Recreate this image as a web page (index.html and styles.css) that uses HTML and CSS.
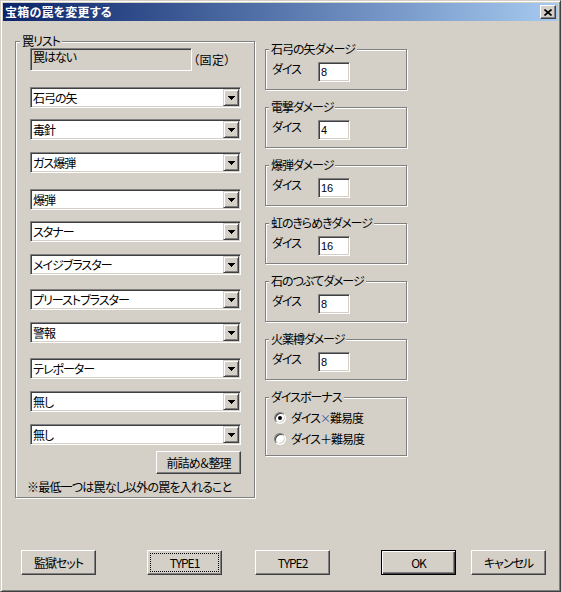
FILE: index.html
```html
<!DOCTYPE html>
<html lang="ja">
<head>
<meta charset="utf-8">
<title>宝箱の罠を変更する</title>
<link rel="stylesheet" href="styles.css">
</head>
<body>
<div class="window">
  <div class="titlebar">
    <span class="title">宝箱の罠を変更する</span>
    <span class="close"><svg width="8" height="7" viewBox="0 0 8 7"><path d="M0.5 0.5 L7.5 6.5 M7.5 0.5 L0.5 6.5" stroke="#000" stroke-width="1.6" fill="none"/></svg></span>
  </div>
  <div class="main">
    <div class="group trap-list">
      <span class="legend">罠リスト</span>
      <div class="fixed-row">
        <div class="readonly">罠はない</div>
        <span class="fixed-note">（固定）</span>
      </div>
      <div class="combo-list">
        <div class="combo"><span class="combo-text">石弓の矢</span><span class="combo-btn"><svg width="7" height="4" viewBox="0 0 7 4"><path d="M0 0H7L3.5 4Z" fill="#000"/></svg></span></div>
        <div class="combo"><span class="combo-text">毒針</span><span class="combo-btn"><svg width="7" height="4" viewBox="0 0 7 4"><path d="M0 0H7L3.5 4Z" fill="#000"/></svg></span></div>
        <div class="combo"><span class="combo-text">ガス爆弾</span><span class="combo-btn"><svg width="7" height="4" viewBox="0 0 7 4"><path d="M0 0H7L3.5 4Z" fill="#000"/></svg></span></div>
        <div class="combo"><span class="combo-text">爆弾</span><span class="combo-btn"><svg width="7" height="4" viewBox="0 0 7 4"><path d="M0 0H7L3.5 4Z" fill="#000"/></svg></span></div>
        <div class="combo"><span class="combo-text">スタナー</span><span class="combo-btn"><svg width="7" height="4" viewBox="0 0 7 4"><path d="M0 0H7L3.5 4Z" fill="#000"/></svg></span></div>
        <div class="combo"><span class="combo-text">メイジブラスター</span><span class="combo-btn"><svg width="7" height="4" viewBox="0 0 7 4"><path d="M0 0H7L3.5 4Z" fill="#000"/></svg></span></div>
        <div class="combo"><span class="combo-text">プリーストブラスター</span><span class="combo-btn"><svg width="7" height="4" viewBox="0 0 7 4"><path d="M0 0H7L3.5 4Z" fill="#000"/></svg></span></div>
        <div class="combo"><span class="combo-text">警報</span><span class="combo-btn"><svg width="7" height="4" viewBox="0 0 7 4"><path d="M0 0H7L3.5 4Z" fill="#000"/></svg></span></div>
        <div class="combo"><span class="combo-text">テレポーター</span><span class="combo-btn"><svg width="7" height="4" viewBox="0 0 7 4"><path d="M0 0H7L3.5 4Z" fill="#000"/></svg></span></div>
        <div class="combo"><span class="combo-text">無し</span><span class="combo-btn"><svg width="7" height="4" viewBox="0 0 7 4"><path d="M0 0H7L3.5 4Z" fill="#000"/></svg></span></div>
        <div class="combo"><span class="combo-text">無し</span><span class="combo-btn"><svg width="7" height="4" viewBox="0 0 7 4"><path d="M0 0H7L3.5 4Z" fill="#000"/></svg></span></div>
      </div>
      <div class="tidy-row"><div class="btn btn-tidy">前詰め＆整理</div></div>
      <div class="note">※最低一つは罠なし以外の罠を入れること</div>
    </div>
    <div class="right-col">
      <div class="group dmg"><span class="legend">石弓の矢ダメージ</span><span class="dice-label">ダイス</span><span class="num-input">8</span></div>
      <div class="group dmg"><span class="legend">電撃ダメージ</span><span class="dice-label">ダイス</span><span class="num-input">4</span></div>
      <div class="group dmg"><span class="legend">爆弾ダメージ</span><span class="dice-label">ダイス</span><span class="num-input">16</span></div>
      <div class="group dmg"><span class="legend">虹のきらめきダメージ</span><span class="dice-label">ダイス</span><span class="num-input">16</span></div>
      <div class="group dmg"><span class="legend">石のつぶてダメージ</span><span class="dice-label">ダイス</span><span class="num-input">8</span></div>
      <div class="group dmg"><span class="legend">火薬樽ダメージ</span><span class="dice-label">ダイス</span><span class="num-input">8</span></div>
      <div class="group bonus">
        <span class="legend">ダイスボーナス</span>
        <div class="radio-row"><span class="radio checked"></span><span class="radio-text">ダイス<span class="times">×</span>難易度</span></div>
        <div class="radio-row"><span class="radio"></span><span class="radio-text">ダイス＋難易度</span></div>
      </div>
    </div>
  </div>
  <div class="buttons">
    <div class="btn btn-bottom">監獄セット</div>
    <div class="btn btn-bottom btn-type1 focused">TYPE1</div>
    <div class="btn btn-bottom btn-type2">TYPE2</div>
    <div class="btn btn-bottom btn-ok default">OK</div>
    <div class="btn btn-bottom btn-cancel">キャンセル</div>
  </div>
</div>
</body>
</html>
```

FILE: styles.css
```css
html, body {
  margin: 0;
  padding: 0;
  background: #D4D0C8;
}

.window {
  width: 561px;
  height: 592px;
  box-sizing: border-box;
  background: #D4D0C8;
  border: 1px solid;
  border-color: #D4D0C8 #404040 #404040 #D4D0C8;
  box-shadow: inset 1px 1px 0 #fff, inset -1px -1px 0 #808080;
  padding: 2px;
  font-family: "Noto Sans CJK JP", "Noto Sans", sans-serif;
  font-size: 12px;
  font-feature-settings: "palt";
  letter-spacing: -1px;
  color: #000;
  overflow: hidden;
}

.titlebar {
  height: 18px;
  background: linear-gradient(to right, #0A246A, #A6CAF0);
  display: flex;
  align-items: center;
  justify-content: space-between;
  padding: 0 2px 0 2px;
}

.title {
  color: #fff;
  font-weight: bold;
  font-size: 12px;
  line-height: 18px;
  letter-spacing: 0.2px;
}

.close {
  width: 16px;
  height: 14px;
  box-sizing: border-box;
  background: #D4D0C8;
  border: 1px solid;
  border-color: #fff #404040 #404040 #fff;
  box-shadow: inset -1px -1px 0 #808080;
  display: flex;
  align-items: center;
  justify-content: center;
}

.main {
  display: flex;
  align-items: flex-start;
  margin-top: 20px;
  padding-left: 12px;
  gap: 10px;
}

.group {
  position: relative;
  box-sizing: border-box;
  border: 1px solid #808080;
  box-shadow: inset 1px 1px 0 #fff, 1px 1px 0 #fff;
}

.legend {
  position: absolute;
  top: -8px;
  left: 4px;
  background: #D4D0C8;
  padding: 0 2px;
  line-height: 14px;
  white-space: nowrap;
}

.trap-list {
  width: 240px;
  height: 457px;
  padding: 6px 0 0 14px;
  display: flex;
  flex-direction: column;
}

.fixed-row {
  display: flex;
  align-items: center;
  height: 23px;
}

.readonly {
  width: 162px;
  height: 23px;
  box-sizing: border-box;
  border: 1px solid;
  border-color: #808080 #fff #fff #808080;
  box-shadow: inset 1px 1px 0 #404040, inset -1px -1px 0 #D4D0C8;
  padding: 0 2px;
  line-height: 15px;
}

.fixed-note {
  margin-left: 1px;
  line-height: 14px;
  letter-spacing: 0.5px;
}

.combo-list {
  display: flex;
  flex-direction: column;
}

.combo {
  width: 211px;
  height: 21px;
  box-sizing: border-box;
  background: #fff;
  border: 1px solid;
  border-color: #808080 #fff #fff #808080;
  box-shadow: inset 1px 1px 0 #404040, inset -1px -1px 0 #D4D0C8;
  padding: 1px;
  display: flex;
  align-items: center;
  justify-content: space-between;
}

.combo:nth-child(1) { margin-top: 16px; }
.combo:nth-child(2) { margin-top: 11px; }
.combo:nth-child(3) { margin-top: 12px; }
.combo:nth-child(4) { margin-top: 16px; }
.combo:nth-child(5) { margin-top: 11px; }
.combo:nth-child(6) { margin-top: 12px; }
.combo:nth-child(7) { margin-top: 14px; }
.combo:nth-child(8) { margin-top: 12px; }
.combo:nth-child(9) { margin-top: 15px; }
.combo:nth-child(10) { margin-top: 12px; }
.combo:nth-child(11) { margin-top: 12px; }

.combo-text {
  padding-left: 1px;
  line-height: 14px;
  white-space: nowrap;
}

.combo-btn {
  width: 16px;
  height: 17px;
  box-sizing: border-box;
  background: #D4D0C8;
  border: 1px solid;
  border-color: #D4D0C8 #404040 #404040 #D4D0C8;
  box-shadow: inset 1px 1px 0 #fff, inset -1px -1px 0 #808080;
  display: flex;
  align-items: center;
  justify-content: center;
}

.combo-btn svg {
  display: block;
  shape-rendering: crispEdges;
}

.btn {
  box-sizing: border-box;
  background: #D4D0C8;
  border: 1px solid;
  border-color: #fff #404040 #404040 #fff;
  box-shadow: inset -1px -1px 0 #808080;
  display: flex;
  align-items: center;
  justify-content: center;
  line-height: 14px;
  white-space: nowrap;
}

.tidy-row {
  width: 211px;
  display: flex;
  justify-content: flex-end;
  margin-top: 6px;
}

.btn-tidy {
  width: 85px;
  height: 23px;
}

.note {
  margin-top: 6px;
  margin-left: -3px;
  line-height: 14px;
  white-space: nowrap;
  letter-spacing: -0.8px;
}

.right-col {
  display: flex;
  flex-direction: column;
  margin-top: 8px;
  gap: 17px;
}

.right-col .legend {
  left: 3px;
}

.dmg {
  width: 142px;
  height: 41px;
  padding: 12px 0 0 6px;
  display: flex;
  align-items: flex-start;
}

.dice-label {
  width: 46px;
  line-height: 14px;
}

.num-input {
  width: 32px;
  height: 20px;
  box-sizing: border-box;
  background: #fff;
  border: 1px solid;
  border-color: #808080 #fff #fff #808080;
  box-shadow: inset 1px 1px 0 #404040, inset -1px -1px 0 #D4D0C8;
  padding: 0 2px;
  font-family: "Liberation Sans", Arial, sans-serif;
  font-size: 11px;
  letter-spacing: 0;
  line-height: 18px;
}

.bonus {
  width: 142px;
  height: 59px;
  padding: 13px 0 0 8px;
  display: flex;
  flex-direction: column;
  gap: 7px;
}

.radio-row {
  display: flex;
  align-items: center;
  height: 14px;
}

.radio {
  width: 12px;
  height: 12px;
  box-sizing: border-box;
  border-radius: 50%;
  background: #fff;
  border: 1px solid;
  border-color: #808080 #fff #fff #808080;
  box-shadow: inset 1px 1px 0 #404040, inset -1px -1px 0 #D4D0C8;
  display: flex;
  align-items: center;
  justify-content: center;
}

.radio.checked::after {
  content: "";
  width: 4px;
  height: 4px;
  border-radius: 50%;
  background: #000;
}

.radio-text {
  margin-left: 5px;
  line-height: 14px;
  white-space: nowrap;
}

.times {
  color: #2c5aa0;
  font-size: 11px;
}

.buttons {
  display: flex;
  margin-top: 52px;
  padding-left: 18px;
}

.btn-bottom {
  width: 75px;
  height: 25px;
}

.btn-type1 { margin-left: 51px; }
.btn-type2 { margin-left: 33px; }
.btn-ok { margin-left: 51px; }
.btn-cancel { margin-left: 15px; }

.focused {
  outline: 1px dotted #000;
  outline-offset: -4px;
}

.default {
  border: 1px solid #000;
  box-shadow: inset 1px 1px 0 #fff, inset -1px -1px 0 #404040, inset -2px -2px 0 #808080;
}
```
